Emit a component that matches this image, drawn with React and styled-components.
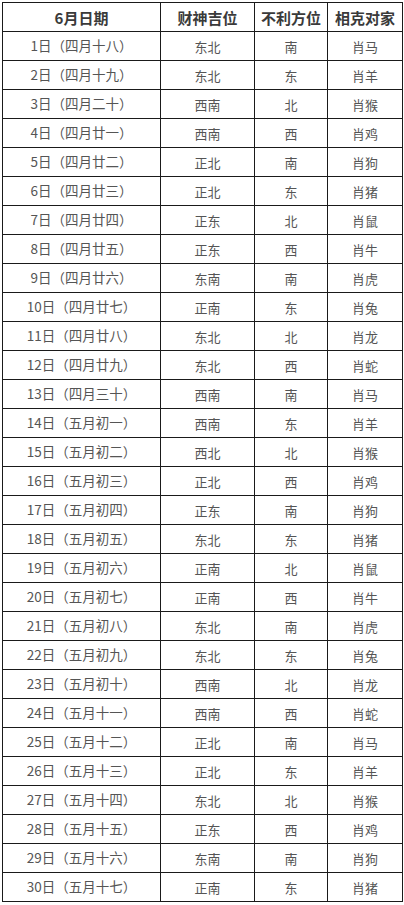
import React from "react";
import styled, { createGlobalStyle } from "styled-components";

const Global = createGlobalStyle`
  html, body { margin: 0; padding: 0; background: #fff; }
  body { padding: 2px 0 0 2px; font-family: "Microsoft YaHei", "Noto Sans CJK SC", "Noto Sans", sans-serif; }
`;

const Table = styled.table`
  border-collapse: collapse;
  table-layout: fixed;
  width: 400px;
`;

const Col = styled.col`
  width: ${(p) => p.$w}px;
`;

const Th = styled.th`
  border: 1px solid #1a1a1a;
  height: 28px;
  padding: 0;
  font-size: 15px;
  font-weight: bold;
  color: #3a3a3a;
  text-align: center;
  vertical-align: middle;
  line-height: 1;
`;

const Td = styled.td`
  border: 1px solid #1a1a1a;
  height: 28px;
  padding: 0;
  font-size: ${(p) => (p.$wide ? "13.5px" : "13px")};
  color: #555;
  text-align: center;
  vertical-align: middle;
  line-height: 1;
  white-space: nowrap;
`;

const rows = [
  ["四月十八", "东北", "南", "肖马"],
  ["四月十九", "东北", "东", "肖羊"],
  ["四月二十", "西南", "北", "肖猴"],
  ["四月廿一", "西南", "西", "肖鸡"],
  ["四月廿二", "正北", "南", "肖狗"],
  ["四月廿三", "正北", "东", "肖猪"],
  ["四月廿四", "正东", "北", "肖鼠"],
  ["四月廿五", "正东", "西", "肖牛"],
  ["四月廿六", "东南", "南", "肖虎"],
  ["四月廿七", "正南", "东", "肖兔"],
  ["四月廿八", "东北", "北", "肖龙"],
  ["四月廿九", "东北", "西", "肖蛇"],
  ["四月三十", "西南", "南", "肖马"],
  ["五月初一", "西南", "东", "肖羊"],
  ["五月初二", "西北", "北", "肖猴"],
  ["五月初三", "正北", "西", "肖鸡"],
  ["五月初四", "正东", "南", "肖狗"],
  ["五月初五", "东北", "东", "肖猪"],
  ["五月初六", "正南", "北", "肖鼠"],
  ["五月初七", "正南", "西", "肖牛"],
  ["五月初八", "东北", "南", "肖虎"],
  ["五月初九", "东北", "东", "肖兔"],
  ["五月初十", "西南", "北", "肖龙"],
  ["五月十一", "西南", "西", "肖蛇"],
  ["五月十二", "正北", "南", "肖马"],
  ["五月十三", "正北", "东", "肖羊"],
  ["五月十四", "东北", "北", "肖猴"],
  ["五月十五", "正东", "西", "肖鸡"],
  ["五月十六", "东南", "南", "肖狗"],
  ["五月十七", "正南", "东", "肖猪"],
];

export default function App() {
  return (
    <>
      <Global />
      <Table>
        <colgroup>
          <Col $w={158} />
          <Col $w={94} />
          <Col $w={73} />
          <Col $w={75} />
        </colgroup>
        <thead>
          <tr>
            <Th>6月日期</Th>
            <Th>财神吉位</Th>
            <Th>不利方位</Th>
            <Th>相克对家</Th>
          </tr>
        </thead>
        <tbody>
          {rows.map((r, i) => (
            <tr key={i}>
              <Td $wide>{`${i + 1}日（${r[0]}）`}</Td>
              <Td>{r[1]}</Td>
              <Td>{r[2]}</Td>
              <Td>{r[3]}</Td>
            </tr>
          ))}
        </tbody>
      </Table>
    </>
  );
}
